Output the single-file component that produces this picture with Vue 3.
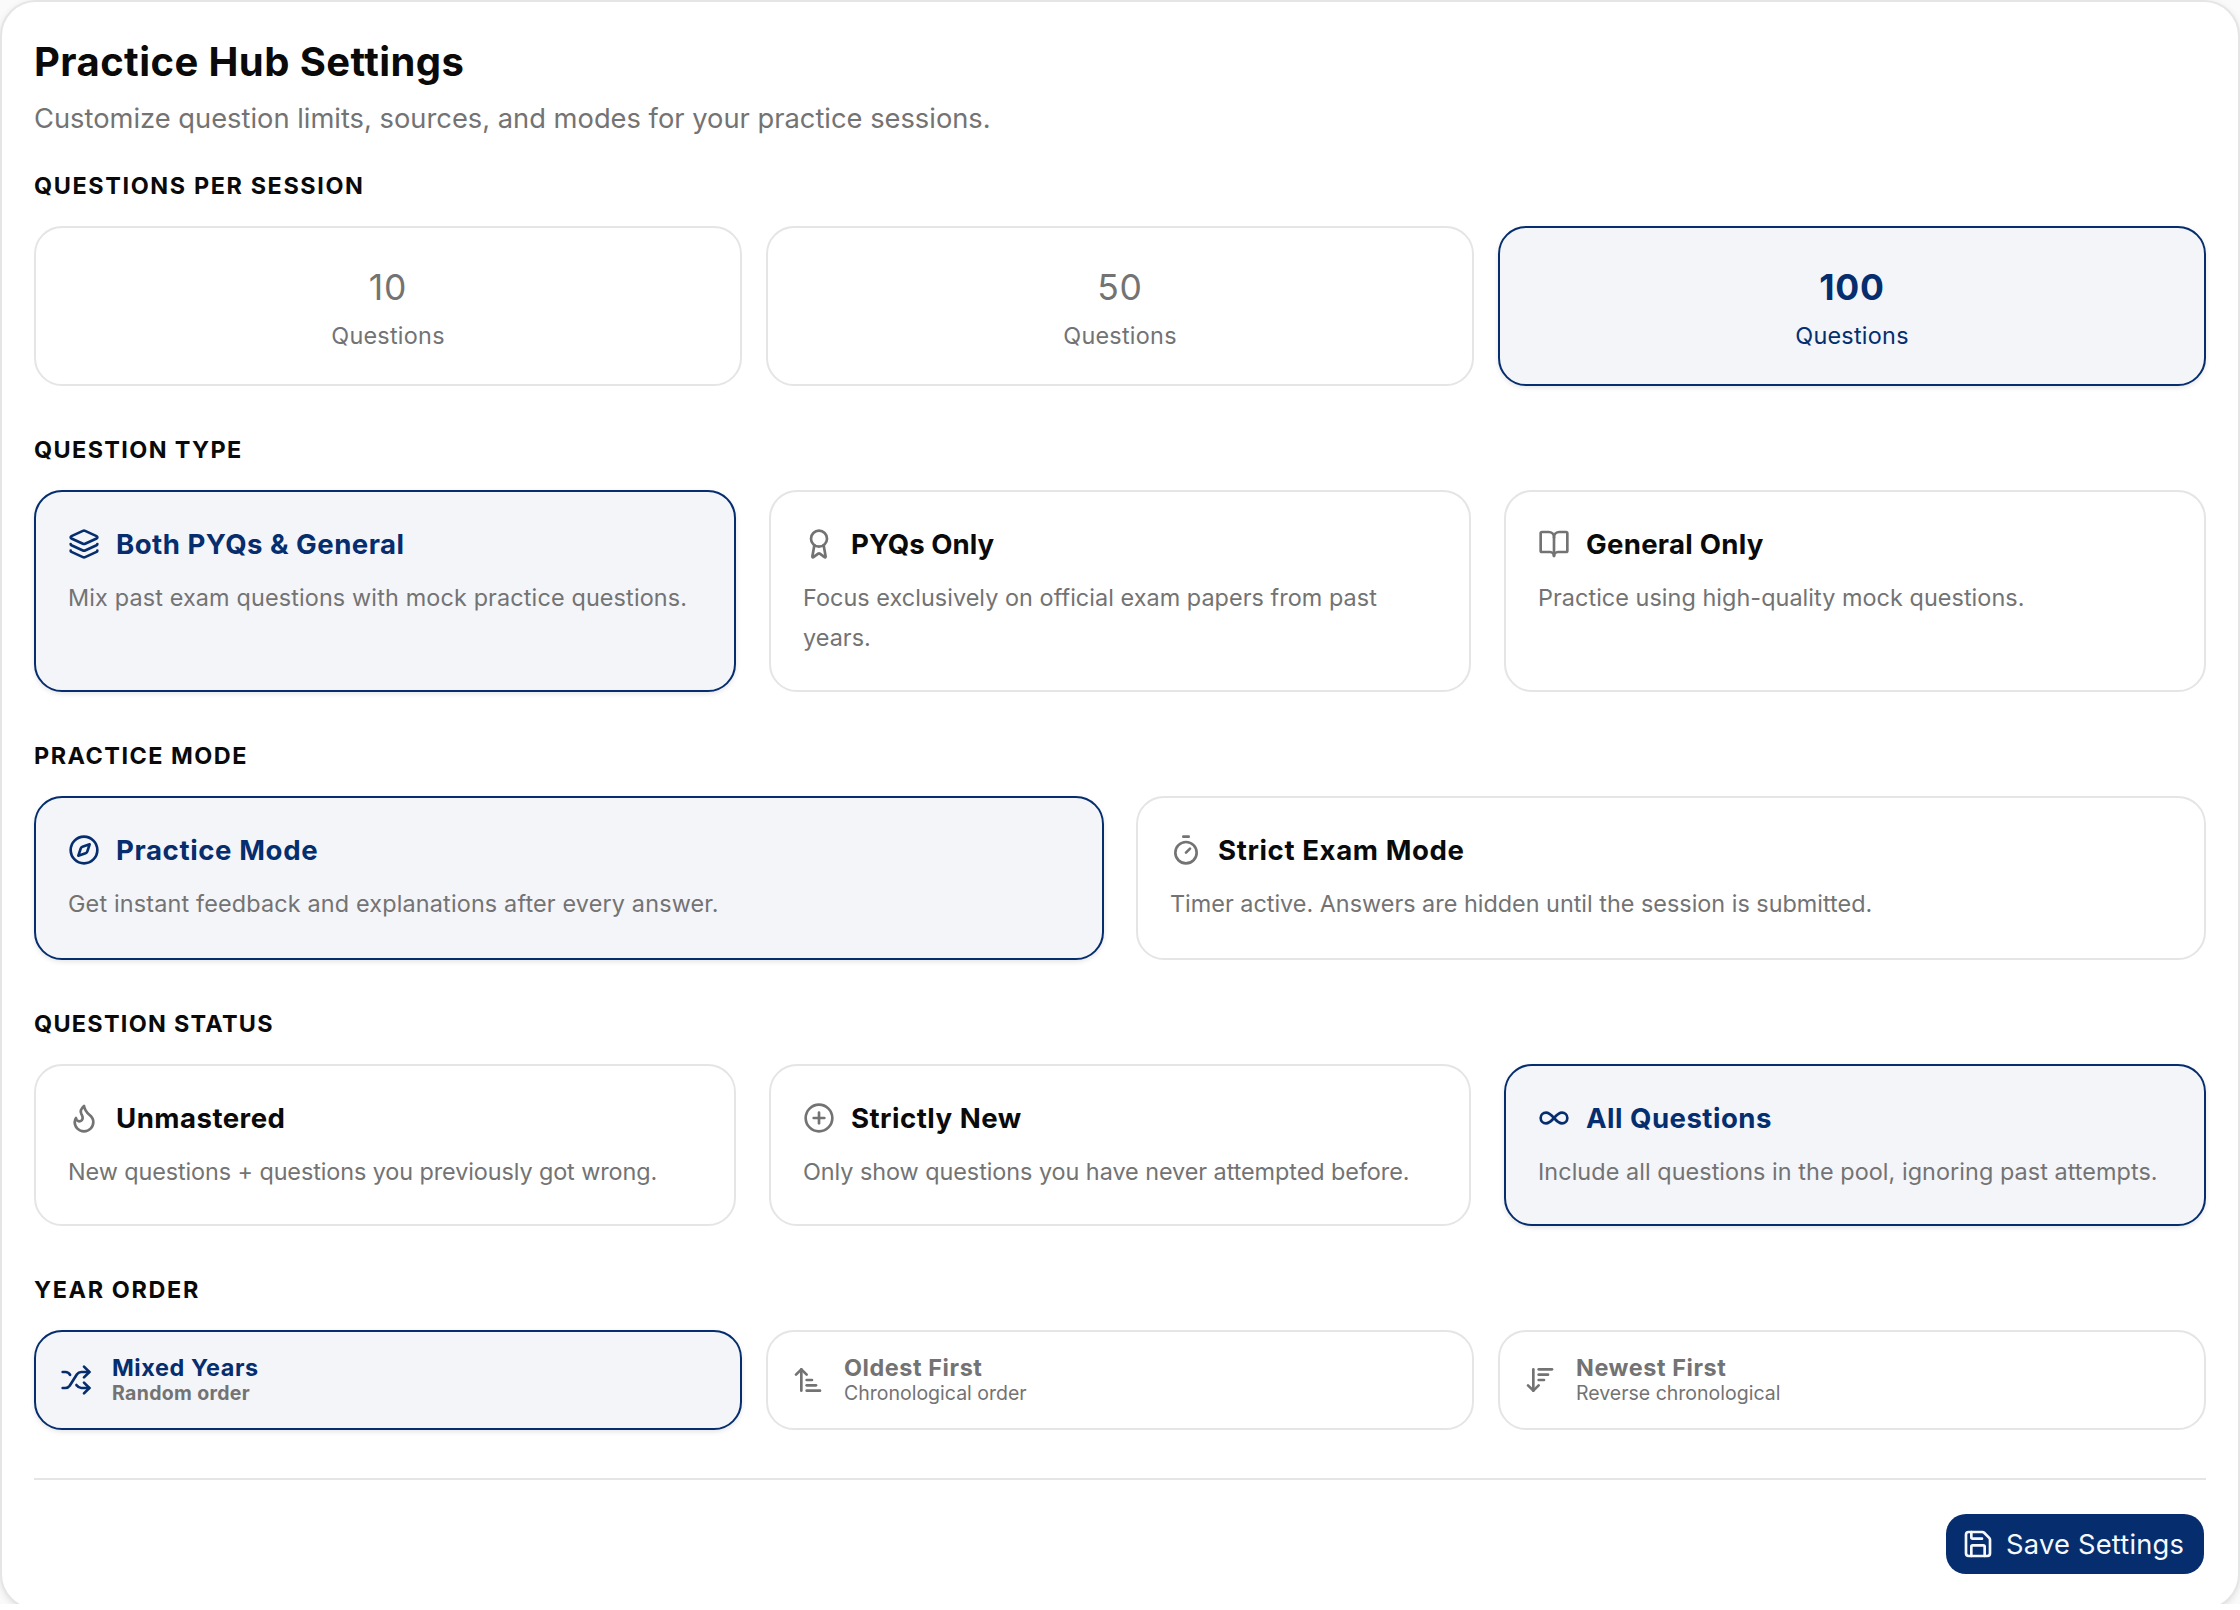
<template>
    <div class="viewport">
        <div class="settings-card">
            <header class="settings-header">
                <h1>Practice Hub Settings</h1>
                <p>Customize question limits, sources, and modes for your practice sessions.</p>
            </header>

            <section v-for="group in groups" :key="group.id" class="group">
                <h2 class="group-label" :class="'label-' + group.id">{{ group.label }}</h2>
                <div class="options" :class="[group.kind, group.id]">
                    <button
                        v-for="option in group.options"
                        :key="option.value"
                        type="button"
                        class="option"
                        :class="[option.value, { active: selected[group.id] === option.value }]"
                        @click="selected[group.id] = option.value"
                    >
                        <template v-if="group.kind === 'count'">
                            <span class="count-number">{{ option.title }}</span>
                            <span class="count-text">{{ option.text }}</span>
                        </template>
                        <template v-else-if="group.kind === 'order'">
                            <svg class="icon" viewBox="0 0 24 24" v-html="icons[option.icon]"></svg>
                            <span class="order-body">
                                <span class="order-title">{{ option.title }}</span>
                                <span class="order-text">{{ option.text }}</span>
                            </span>
                        </template>
                        <template v-else>
                            <span class="detail-head">
                                <svg class="icon" viewBox="0 0 24 24" v-html="icons[option.icon]"></svg>
                                <span class="detail-title">{{ option.title }}</span>
                            </span>
                            <span class="detail-text">{{ option.text }}</span>
                        </template>
                    </button>
                </div>
            </section>

            <footer class="settings-footer">
                <button type="button" class="save-button">
                    <svg class="icon" viewBox="0 0 24 24" v-html="icons.save"></svg>
                    <span>Save Settings</span>
                </button>
            </footer>
        </div>
    </div>
</template>

<script setup>
import { reactive } from 'vue';

const selected = reactive({
    limit: 'q100',
    type: 'both',
    mode: 'practice',
    status: 'all',
    year: 'mixed'
});

const groups = [
    {
        id: 'limit',
        kind: 'count',
        label: 'Questions per session',
        options: [
            { value: 'q10', title: '10', text: 'Questions' },
            { value: 'q50', title: '50', text: 'Questions' },
            { value: 'q100', title: '100', text: 'Questions' }
        ]
    },
    {
        id: 'type',
        kind: 'detail',
        label: 'Question type',
        options: [
            { value: 'both', icon: 'layers', title: 'Both PYQs & General', text: 'Mix past exam questions with mock practice questions.' },
            { value: 'pyqs', icon: 'award', title: 'PYQs Only', text: 'Focus exclusively on official exam papers from past years.' },
            { value: 'general', icon: 'book', title: 'General Only', text: 'Practice using high-quality mock questions.' }
        ]
    },
    {
        id: 'mode',
        kind: 'detail',
        label: 'Practice mode',
        options: [
            { value: 'practice', icon: 'compass', title: 'Practice Mode', text: 'Get instant feedback and explanations after every answer.' },
            { value: 'strict', icon: 'timer', title: 'Strict Exam Mode', text: 'Timer active. Answers are hidden until the session is submitted.' }
        ]
    },
    {
        id: 'status',
        kind: 'detail',
        label: 'Question status',
        options: [
            { value: 'unmastered', icon: 'flame', title: 'Unmastered', text: 'New questions + questions you previously got wrong.' },
            { value: 'new', icon: 'plus', title: 'Strictly New', text: 'Only show questions you have never attempted before.' },
            { value: 'all', icon: 'infinity', title: 'All Questions', text: 'Include all questions in the pool, ignoring past attempts.' }
        ]
    },
    {
        id: 'year',
        kind: 'order',
        label: 'Year order',
        options: [
            { value: 'mixed', icon: 'shuffle', title: 'Mixed Years', text: 'Random order' },
            { value: 'oldest', icon: 'ascending', title: 'Oldest First', text: 'Chronological order' },
            { value: 'newest', icon: 'descending', title: 'Newest First', text: 'Reverse chronological' }
        ]
    }
];

// 24x24 stroke icons
const icons = {
    layers: '<path d="M12.83 2.18a2 2 0 0 0-1.66 0L2.6 6.08a1 1 0 0 0 0 1.83l8.58 3.91a2 2 0 0 0 1.66 0l8.58-3.9a1 1 0 0 0 0-1.83z"/><path d="M2 12a1 1 0 0 0 .58.91l8.6 3.91a2 2 0 0 0 1.65 0l8.58-3.9A1 1 0 0 0 22 12"/><path d="M2 17a1 1 0 0 0 .58.91l8.6 3.91a2 2 0 0 0 1.65 0l8.58-3.9A1 1 0 0 0 22 17"/>',
    award: '<path d="m15.477 12.89 1.515 8.526a.5.5 0 0 1-.81.47l-3.58-2.687a1 1 0 0 0-1.197 0l-3.586 2.686a.5.5 0 0 1-.81-.469l1.514-8.526"/><circle cx="12" cy="8" r="6"/>',
    book: '<path d="M12 7v14"/><path d="M3 18a1 1 0 0 1-1-1V4a1 1 0 0 1 1-1h5a4 4 0 0 1 4 4 4 4 0 0 1 4-4h5a1 1 0 0 1 1 1v13a1 1 0 0 1-1 1h-6a3 3 0 0 0-3 3 3 3 0 0 0-3-3z"/>',
    compass: '<circle cx="12" cy="12" r="10"/><path d="m16.24 7.76-1.804 5.411a2 2 0 0 1-1.265 1.265L7.76 16.24l1.804-5.411a2 2 0 0 1 1.265-1.265z"/>',
    timer: '<path d="M10 2h4"/><path d="m12 14 3-3"/><circle cx="12" cy="14" r="8"/>',
    flame: '<path d="M8.5 14.5A2.5 2.5 0 0 0 11 12c0-1.38-.5-2-1-3-1.072-2.143-.224-4.054 2-6 .5 2.5 2 4.9 4 6.5 2 1.6 3 3.5 3 5.5a7 7 0 1 1-14 0c0-1.153.433-2.294 1-3a2.5 2.5 0 0 0 2.5 2.5z"/>',
    plus: '<circle cx="12" cy="12" r="10"/><path d="M8 12h8"/><path d="M12 8v8"/>',
    infinity: '<path d="M6 16c5 0 7-8 12-8a4 4 0 0 1 0 8c-5 0-7-8-12-8a4 4 0 1 0 0 8"/>',
    shuffle: '<path d="m18 14 4 4-4 4"/><path d="m18 2 4 4-4 4"/><path d="M2 18h1.973a4 4 0 0 0 3.3-1.7l5.454-8.6a4 4 0 0 1 3.3-1.7H22"/><path d="M2 6h1.972a4 4 0 0 1 3.6 2.2"/><path d="M22 18h-6.041a4 4 0 0 1-3.3-1.8l-.359-.45"/>',
    ascending: '<path d="m3 8 4-4 4 4"/><path d="M7 4v16"/><path d="M11 12h4"/><path d="M11 16h7"/><path d="M11 20h10"/>',
    descending: '<path d="m3 16 4 4 4-4"/><path d="M7 20V4"/><path d="M11 4h10"/><path d="M11 8h7"/><path d="M11 12h4"/>',
    save: '<path d="M15.2 3a2 2 0 0 1 1.4.6l3.8 3.8a2 2 0 0 1 .6 1.4V19a2 2 0 0 1-2 2H5a2 2 0 0 1-2-2V5a2 2 0 0 1 2-2z"/><path d="M17 21v-7a1 1 0 0 0-1-1H8a1 1 0 0 0-1 1v7"/><path d="M7 3v4a1 1 0 0 0 1 1h7"/>'
};
</script>

<style>
body {
    margin: 0;
    background: #fff;
}
</style>

<style scoped>
.viewport {
    height: 1604px;
    overflow: hidden;
    background: #fafafa;
    font-family: Inter, "Liberation Sans", sans-serif;
    color: #0a0a0a;
}
.settings-card {
    box-sizing: border-box;
    height: 1610px;
    padding: 36px 32px 0;
    border: 2px solid #e5e5e5;
    border-radius: 36px;
    background: #fff;
    box-shadow: 0 2px 6px rgba(0, 0, 0, 0.1);
}
h1, h2, p {
    margin: 0;
}
button {
    margin: 0;
    font: inherit;
    color: inherit;
    text-align: left;
}
.settings-header h1 {
    font-size: 40px;
    line-height: 48px;
    font-weight: 700;
    letter-spacing: 0.42px;
}
.settings-header p {
    margin-top: 13px;
    font-size: 27.3px;
    line-height: 40px;
    color: #737373;
}
.group {
    margin-top: 48px;
}
.settings-header + .group {
    margin-top: 31px;
}
.group-label {
    margin-bottom: 24px;
    font-size: 23.4px;
    line-height: 32px;
    font-weight: 700;
    letter-spacing: 1.5px;
    text-transform: uppercase;
}
.label-limit {
    letter-spacing: 1.62px;
}
.label-type {
    letter-spacing: 1.38px;
}
.label-status {
    letter-spacing: 1.28px;
}
.label-year {
    letter-spacing: 1.64px;
}
.options {
    display: grid;
    grid-template-columns: repeat(3, 1fr);
    gap: 33px;
}
.options.count,
.options.order {
    gap: 24px;
}
.options.mode {
    grid-template-columns: repeat(2, 1fr);
    gap: 32px;
}
.options.limit {
    height: 160px;
}
.options.type {
    height: 202px;
}
.options.mode {
    height: 164px;
}
.options.status {
    height: 162px;
}
.options.year {
    height: 100px;
}
.option {
    display: flex;
    box-sizing: border-box;
    border: 2px solid #e5e5e5;
    border-radius: 28px;
    background: #fff;
    color: #737373;
}
.option.active {
    border-color: #062e6e;
    background: #f3f5f9;
    color: #062e6e;
    box-shadow: 0 2px 5px rgba(0, 0, 0, 0.1);
}
.icon {
    display: block;
    flex: none;
    width: 32px;
    height: 32px;
    fill: none;
    stroke: currentColor;
    stroke-width: 2;
    stroke-linecap: round;
    stroke-linejoin: round;
}

/* question count */
.count .option {
    flex-direction: column;
    align-items: center;
    justify-content: center;
    gap: 8px;
    padding: 3px 0 0;
}
.count-number {
    font-size: 35.5px;
    line-height: 48px;
    letter-spacing: 0.8px;
}
.active .count-number {
    font-weight: 700;
}
.count-text {
    font-size: 23.4px;
    line-height: 32px;
    letter-spacing: 0.25px;
}

/* icon + title + description */
.detail .option {
    flex-direction: column;
    padding: 32px;
}
.detail-head {
    display: flex;
    align-items: center;
    gap: 16px;
    height: 40px;
}
.detail-title {
    font-size: 27.6px;
    line-height: 40px;
    font-weight: 700;
    letter-spacing: 0.47px;
    color: #0a0a0a;
}
.active .detail-title {
    color: inherit;
}
.pyqs .detail-title {
    letter-spacing: 0;
}
.general .detail-title {
    letter-spacing: 0.27px;
}
.practice .detail-title,
.strict .detail-title {
    letter-spacing: 0.61px;
}
.detail-text {
    margin-top: 14px;
    font-size: 23.4px;
    line-height: 40px;
    color: #737373;
}
.both .detail-text {
    letter-spacing: 0.14px;
}
.pyqs .detail-text,
.general .detail-text {
    letter-spacing: 0.05px;
}
.practice .detail-text {
    letter-spacing: 0.16px;
}
.unmastered .detail-text {
    letter-spacing: -0.09px;
}
.new .detail-text {
    letter-spacing: -0.05px;
}
.all .detail-text {
    letter-spacing: 0.06px;
}

/* year order */
.order .option {
    align-items: center;
    gap: 20px;
    padding: 0 24px;
}
.order-body {
    display: flex;
    flex-direction: column;
    padding-bottom: 1px;
}
.order-title {
    font-size: 23.4px;
    line-height: 28px;
    font-weight: 700;
    letter-spacing: 0.58px;
}
.order-text {
    margin-top: -1px;
    font-size: 19.5px;
    line-height: 24px;
    color: #737373;
}
.active .order-text {
    font-weight: 700;
    letter-spacing: 0.33px;
}

.settings-footer {
    display: flex;
    justify-content: flex-end;
    margin-top: 48px;
    padding: 34px 2px 0 0;
    border-top: 2px solid #e5e5e5;
}
.save-button {
    display: flex;
    align-items: center;
    gap: 12px;
    width: 258px;
    height: 60px;
    padding: 0 16px;
    border: 0;
    border-radius: 20px;
    background: #062e6e;
    color: #f5f9ff;
    font-size: 27.3px;
    letter-spacing: 0.22px;
    white-space: nowrap;
}
</style>
